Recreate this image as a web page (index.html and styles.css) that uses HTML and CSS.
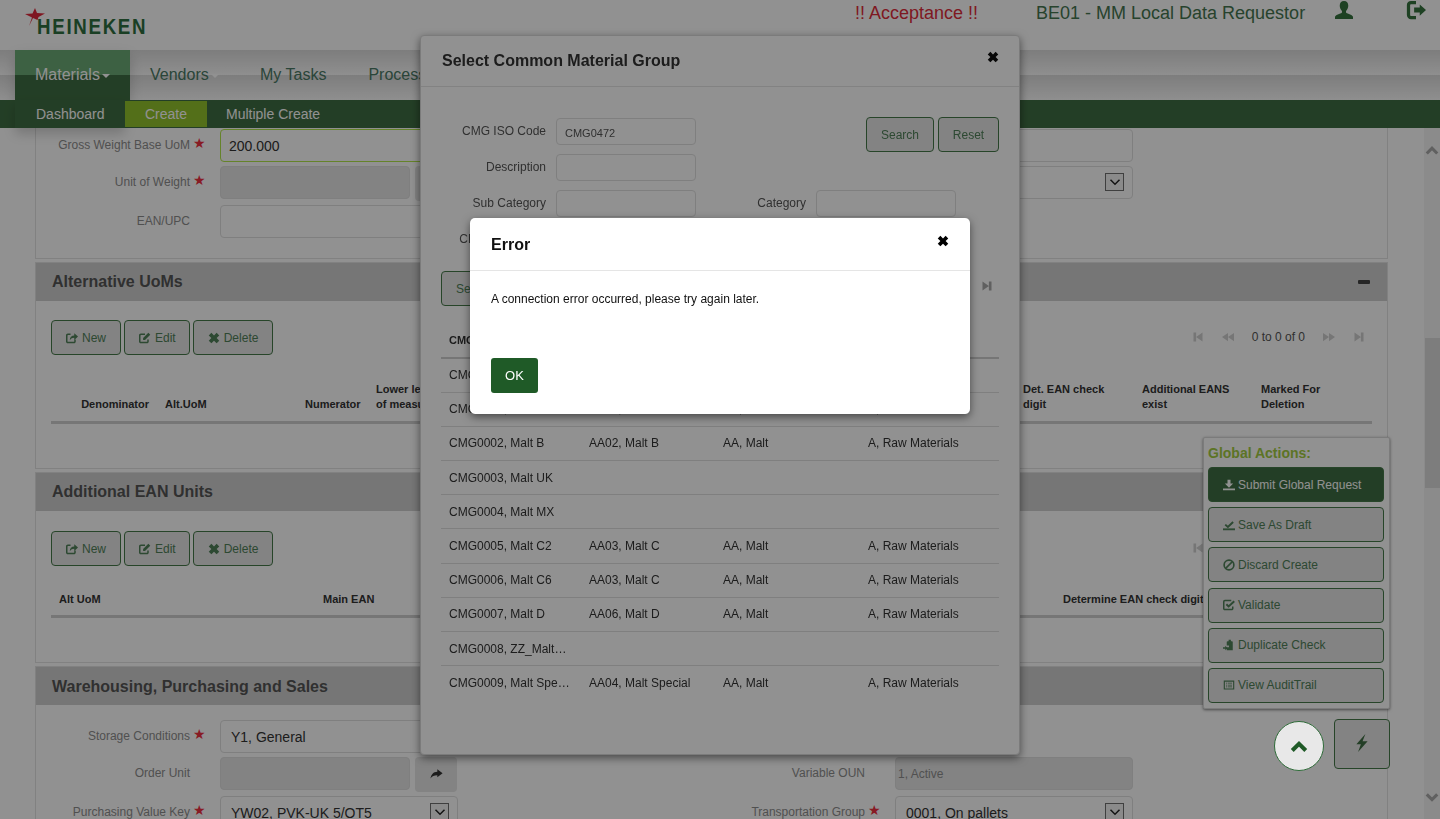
FILE: index.html
```html
<!DOCTYPE html>
<html lang="en">
<head>
    <meta charset="UTF-8">
    <title>Material Create</title>
    <link rel="stylesheet" href="styles.css">
</head>
<body>
    <svg class="defs" aria-hidden="true">
        <symbol id="i-new" viewBox="0 0 16 16"><path d="M12 10v2.500a1.500 1.500 0 0 1-1.500 1.500h-8A1.500 1.500 0 0 1 1 12.500v-8A1.500 1.500 0 0 1 2.500 3H6" fill="none" stroke="currentColor" stroke-width="2"/><path d="M5 11c0-4.500 2.500-6.500 6-6.500V1.500L16 6l-5 4.500V7.500c-2.500 0-4.500 1-6 3.500z"/></symbol>
        <symbol id="i-edit" viewBox="0 0 16 16"><path d="M12 10v2.500a1.500 1.500 0 0 1-1.500 1.500h-8A1.500 1.500 0 0 1 1 12.500v-8A1.500 1.500 0 0 1 2.500 3H8" fill="none" stroke="currentColor" stroke-width="2"/><path d="M5.500 8L12.500 1l2.500 2.500-7 7H5.500z"/></symbol>
        <symbol id="i-x" viewBox="0 0 16 16"><path d="M1 4.500L4.500 1 8 4.500 11.500 1 15 4.500 11.500 8 15 11.500 11.500 15 8 11.500 4.500 15 1 11.500 4.500 8z"/></symbol>
        <symbol id="i-down" viewBox="0 0 16 16"><path d="M0 12.500h16V15H0zM6 1h4v5h3.500L8 11.500 2.500 6H6z"/></symbol>
        <symbol id="i-saved" viewBox="0 0 16 16"><path d="M0 12.500h16V15H0z"/><path d="M3 7.500l3.500 3L13.500 4" fill="none" stroke="currentColor" stroke-width="2.600"/></symbol>
        <symbol id="i-ban" viewBox="0 0 16 16"><circle cx="8" cy="8" r="6.500" fill="none" stroke="currentColor" stroke-width="2.200"/><path d="M3.500 12.500l9-9" stroke="currentColor" stroke-width="2.200"/></symbol>
        <symbol id="i-check" viewBox="0 0 16 16"><path d="M13 10v2.500a1.500 1.500 0 0 1-1.500 1.500h-9A1.500 1.500 0 0 1 1 12.500v-9A1.500 1.500 0 0 1 2.500 2H11" fill="none" stroke="currentColor" stroke-width="2"/><path d="M4.500 7l3 3L15 3" fill="none" stroke="currentColor" stroke-width="2.600"/></symbol>
        <symbol id="i-dup" viewBox="0 0 16 16"><path d="M6 3h1.500V1h3v2H12l1 .5V15H5v-4h3V8.500H5V3.500zM0 11h3V9l3 3-3 3v-2H0z"/></symbol>
        <symbol id="i-list" viewBox="0 0 16 16"><path d="M1 2h14v12H1zM2.500 3.500v9h11v-9zM4 5h1.500v1H4zm2.500 0H12v1H6.500zM4 7.500h1.500v1H4zm2.500 0H12v1H6.500zM4 10h1.500v1H4zm2.500 0H12v1H6.500z" fill-rule="evenodd"/></symbol>
        <symbol id="i-up" viewBox="0 0 16 16"><path d="M2 12l6-6 6 6" fill="none" stroke="currentColor" stroke-width="3.600"/></symbol>
        <symbol id="i-dn" viewBox="0 0 16 16"><path d="M2 5l6 6 6-6" fill="none" stroke="currentColor" stroke-width="3.600"/></symbol>
        <symbol id="i-arrow" viewBox="0 0 16 16"><path d="M2 5l6 6 6-6" fill="none" stroke="currentColor" stroke-width="2"/></symbol>
        <symbol id="i-bolt" viewBox="0 0 16 16"><path d="M11 0L3 9h4l-2.500 7L13 6.500H8.500z"/></symbol>
        <symbol id="i-user" viewBox="0 0 16 16"><path d="M8 0c2.500 0 3.800 1.800 3.800 4.200 0 2-1 3.600-2 4.600v1.500c0 .8 4.900 1.400 6.200 3.700v2H0v-2c1.300-2.300 6.200-2.900 6.200-3.700V8.800c-1-1-2-2.600-2-4.600C4.200 1.800 5.500 0 8 0z"/></symbol>
        <symbol id="i-logout" viewBox="0 0 16 16"><path d="M8 2H4a2 2 0 0 0-2 2v8a2 2 0 0 0 2 2h4" fill="none" stroke="currentColor" stroke-width="2.600"/><path d="M6.500 6h4.500V3.500L16 8l-5 4.500V10H6.500z"/></symbol>
        <symbol id="i-share" viewBox="0 0 16 16"><path d="M15.500 6.500L9 1.500v3C4 4.500 1.500 8 .5 13c2-3 4.500-4 8.500-4v2.500z"/></symbol>
        <symbol id="i-first" viewBox="0 0 16 16"><path d="M2 2h3.500v12H2zM14 2v12L5.500 8z"/></symbol>
        <symbol id="i-prev" viewBox="0 0 16 16"><path d="M8 2.500v11L0 8zM16 2.500v11L8 8z"/></symbol>
        <symbol id="i-next" viewBox="0 0 16 16"><path d="M0 2.500v11L8 8zM8 2.500v11L16 8z"/></symbol>
        <symbol id="i-last" viewBox="0 0 16 16"><path d="M2 2v12l8.500-6zM10.500 2H14v12h-3.500z"/></symbol>
    </svg>

    <div class="page">
        <header class="topbar">
            <div class="logo">
                <svg class="logo-star" viewBox="0 0 20 18"><path d="M10 0l2 5 8 .5-6.500 3.500-1 3L8 10l-4 8 3-8.500L0 6l7.500-.5z"/></svg>
                <span class="logo-text">HEINEKEN</span>
            </div>
            <div class="env">!! Acceptance !!</div>
            <div class="role">BE01 - MM Local Data Requestor</div>
            <svg class="top-ico user-ico"><use href="#i-user"/></svg>
            <svg class="top-ico logout-ico"><use href="#i-logout"/></svg>
        </header>

        <nav class="mainnav">
            <a class="nav-item active">Materials<span class="caret"></span></a>
            <a class="nav-item vendors">Vendors<span class="caret"></span></a>
            <a class="nav-item tasks">My Tasks</a>
            <a class="nav-item">Processes</a>
        </nav>
        <nav class="subnav">
            <a class="sub-item first">Dashboard</a>
            <a class="sub-item current">Create</a>
            <a class="sub-item">Multiple Create</a>
        </nav>

        <div class="main">
            <div class="content">
                <section class="panel first-panel">
                    <div class="form-body top">
                        <div class="form-row">
                            <label class="lbl">Gross Weight Base UoM<span class="req">★</span></label>
                            <input class="inp focus" value="200.000">
                            <label class="lbl right">Net Weight Base UoM<span class="req"></span></label>
                            <input class="inp">
                        </div>
                        <div class="form-row tall">
                            <label class="lbl">Unit of Weight<span class="req">★</span></label>
                            <div class="inp-group"><input class="inp off"><button class="go"><svg class="ico"><use href="#i-share"/></svg></button></div>
                            <label class="lbl right">Volume Unit<span class="req"></span></label>
                            <div class="inp sel"><span class="sel-arrow"><svg><use href="#i-arrow"/></svg></span></div>
                        </div>
                        <div class="form-row">
                            <label class="lbl">EAN/UPC<span class="req"></span></label>
                            <input class="inp">
                        </div>
                    </div>
                </section>

                <section class="panel uom-panel">
                    <h2 class="panel-head">Alternative UoMs<span class="collapse"></span></h2>
                    <div class="panel-body">
                        <div class="toolbar">
                            <div class="btns">
                                <button class="btn"><svg class="ico"><use href="#i-new"/></svg>New</button>
                                <button class="btn"><svg class="ico"><use href="#i-edit"/></svg>Edit</button>
                                <button class="btn"><svg class="ico"><use href="#i-x"/></svg>Delete</button>
                            </div>
                            <div class="pager">
                                <svg class="pg"><use href="#i-first"/></svg>
                                <svg class="pg"><use href="#i-prev"/></svg>
                                <span class="pg-text">0 to 0 of 0</span>
                                <svg class="pg"><use href="#i-next"/></svg>
                                <svg class="pg"><use href="#i-last"/></svg>
                            </div>
                        </div>
                        <table class="grid uom">
                            <colgroup><col class="c1"><col class="c2"><col class="c3"><col class="c4"><col><col class="c6"><col class="c6"><col class="c6"></colgroup>
                            <thead>
                                <tr>
                                    <th class="num">Denominator</th>
                                    <th>Alt.UoM</th>
                                    <th class="num">Numerator</th>
                                    <th>Lower level unit<br>of measure</th>
                                    <th></th>
                                    <th>Det. EAN check digit</th>
                                    <th>Additional EANS exist</th>
                                    <th>Marked For Deletion</th>
                                </tr>
                            </thead>
                        </table>
                    </div>
                </section>

                <section class="panel ean-panel">
                    <h2 class="panel-head">Additional EAN Units</h2>
                    <div class="panel-body">
                        <div class="toolbar">
                            <div class="btns">
                                <button class="btn"><svg class="ico"><use href="#i-new"/></svg>New</button>
                                <button class="btn"><svg class="ico"><use href="#i-edit"/></svg>Edit</button>
                                <button class="btn"><svg class="ico"><use href="#i-x"/></svg>Delete</button>
                            </div>
                            <div class="pager">
                                <svg class="pg"><use href="#i-first"/></svg>
                                <svg class="pg"><use href="#i-prev"/></svg>
                                <span class="pg-text">0 to 0 of 0</span>
                                <svg class="pg"><use href="#i-next"/></svg>
                                <svg class="pg"><use href="#i-last"/></svg>
                            </div>
                        </div>
                        <table class="grid ean">
                            <colgroup><col class="e1"><col><col class="e3"></colgroup>
                            <thead>
                                <tr>
                                    <th>Alt UoM</th>
                                    <th>Main EAN</th>
                                    <th>Determine EAN check digit</th>
                                </tr>
                            </thead>
                        </table>
                    </div>
                </section>

                <section class="panel">
                    <h2 class="panel-head wh-head">Warehousing, Purchasing and Sales</h2>
                    <div class="form-body">
                        <div class="form-row">
                            <label class="lbl">Storage Conditions<span class="req">★</span></label>
                            <input class="inp roomy" value="Y1, General">
                        </div>
                        <div class="form-row tall">
                            <label class="lbl">Order Unit<span class="req"></span></label>
                            <div class="inp-group"><input class="inp off"><button class="go"><svg class="ico"><use href="#i-share"/></svg></button></div>
                            <label class="lbl right">Variable OUN<span class="req"></span></label>
                            <input class="inp off small" value="1, Active">
                        </div>
                        <div class="form-row">
                            <label class="lbl">Purchasing Value Key<span class="req">★</span></label>
                            <div class="inp sel">YW02, PVK-UK 5/OT5<span class="sel-arrow"><svg><use href="#i-arrow"/></svg></span></div>
                            <label class="lbl right">Transportation Group<span class="req">★</span></label>
                            <div class="inp sel">0001, On pallets<span class="sel-arrow"><svg><use href="#i-arrow"/></svg></span></div>
                        </div>
                    </div>
                </section>
            </div>
            <div class="scrollbar">
                <svg class="sc-arrow up"><use href="#i-up"/></svg>
                <div class="thumb"></div>
                <svg class="sc-arrow down"><use href="#i-dn"/></svg>
            </div>
        </div>
    </div>

    <aside class="floating">
        <div class="actions">
            <div class="actions-title">Global Actions:</div>
            <button class="act primary"><svg class="ico"><use href="#i-down"/></svg>Submit Global Request</button>
            <button class="act"><svg class="ico"><use href="#i-saved"/></svg>Save As Draft</button>
            <button class="act"><svg class="ico"><use href="#i-ban"/></svg>Discard Create</button>
            <button class="act"><svg class="ico"><use href="#i-check"/></svg>Validate</button>
            <button class="act"><svg class="ico"><use href="#i-dup"/></svg>Duplicate Check</button>
            <button class="act"><svg class="ico"><use href="#i-list"/></svg>View AuditTrail</button>
        </div>
        <div class="fab-row">
            <button class="to-top"><svg><use href="#i-up"/></svg></button>
            <button class="bolt"><svg><use href="#i-bolt"/></svg></button>
        </div>
    </aside>

    <div class="modal cmg">
        <div class="modal-head">
            <h3>Select Common Material Group</h3>
            <svg class="close"><use href="#i-x"/></svg>
        </div>
        <div class="cmg-form">
            <label class="f-lbl">CMG ISO Code</label>
            <input class="f-inp" value="CMG0472">
            <div class="f-btns">
                <button class="btn plain">Search</button>
                <button class="btn plain">Reset</button>
            </div>
            <label class="f-lbl">Description</label>
            <input class="f-inp">
            <label class="f-lbl c1-start">Sub Category</label>
            <input class="f-inp">
            <label class="f-lbl">Category</label>
            <input class="f-inp">
            <label class="f-lbl c1-start">CMG Reference</label>
            <input class="f-inp">
        </div>
        <div class="cmg-tools">
            <button class="btn">Select</button>
            <svg class="pg dark"><use href="#i-last"/></svg>
        </div>
        <table class="cmg-table">
            <colgroup><col class="m1"><col class="m2"><col class="m3"><col></colgroup>
            <thead>
                <tr><th>CMG</th><th>Sub Category</th><th>Category</th><th>Main Category</th></tr>
            </thead>
            <tbody>
                <tr><td>CMG0000, Malt</td><td></td><td></td><td></td></tr>
                <tr><td>CMG0001, Malt A</td><td>AA01, Malt A</td><td>AA, Malt</td><td>A, Raw Materials</td></tr>
                <tr><td>CMG0002, Malt B</td><td>AA02, Malt B</td><td>AA, Malt</td><td>A, Raw Materials</td></tr>
                <tr><td>CMG0003, Malt UK</td><td></td><td></td><td></td></tr>
                <tr><td>CMG0004, Malt MX</td><td></td><td></td><td></td></tr>
                <tr><td>CMG0005, Malt C2</td><td>AA03, Malt C</td><td>AA, Malt</td><td>A, Raw Materials</td></tr>
                <tr><td>CMG0006, Malt C6</td><td>AA03, Malt C</td><td>AA, Malt</td><td>A, Raw Materials</td></tr>
                <tr><td>CMG0007, Malt D</td><td>AA06, Malt D</td><td>AA, Malt</td><td>A, Raw Materials</td></tr>
                <tr><td>CMG0008, ZZ_MaltOtherTypes</td><td></td><td></td><td></td></tr>
                <tr><td>CMG0009, Malt Special Types</td><td>AA04, Malt Special</td><td>AA, Malt</td><td>A, Raw Materials</td></tr>
            </tbody>
        </table>
    </div>

    <div class="backdrop"></div>

    <div class="modal error">
        <div class="modal-head">
            <h3>Error</h3>
            <svg class="close"><use href="#i-x"/></svg>
        </div>
        <div class="error-body">
            <p>A connection error occurred, please try again later.</p>
            <button class="ok">OK</button>
        </div>
    </div>
</body>
</html>
```

FILE: styles.css
```css
* {
    box-sizing: border-box;
}
html, body {
    height: 100%;
}
body {
    margin: 0;
    overflow: hidden;
    background: #fff;
    color: #333;
    font-family: "Liberation Sans", Arial, sans-serif;
    font-size: 12px;
}
.defs {
    position: absolute;
    width: 0;
    height: 0;
}
svg {
    fill: currentColor;
}
button {
    font-family: inherit;
}
.page {
    height: 100vh;
    display: flex;
    flex-direction: column;
}

/* top bar */
.topbar {
    height: 50px;
    flex: none;
    display: flex;
    font-size: 18px;
    line-height: 26px;
    color: #457650;
}
.logo {
    position: relative;
    width: 146px;
    margin-right: 709px;
    padding: 14px 0 0 37px;
}
.logo-star {
    position: absolute;
    left: 25px;
    top: 8px;
    width: 20px;
    height: 18px;
    color: #e0283a;
    z-index: 1;
}
.logo-text {
    display: inline-block;
    font-weight: bold;
    font-size: 22px;
    letter-spacing: 2px;
    color: #2f7040;
    transform: scaleX(.85);
    transform-origin: left;
}
.env {
    width: 181px;
    color: #e02c3a;
}
.role {
    width: 299px;
}
.top-ico {
    width: 18px;
    height: 18px;
    margin-top: 1px;
    color: #36723f;
}
.logout-ico {
    width: 20px;
    height: 20px;
    margin: 0 0 0 53px;
}

/* main nav */
.mainnav {
    height: 50px;
    flex: none;
    display: flex;
    padding-left: 15px;
    font-size: 16px;
    background: linear-gradient(#dcdcdc, #fbfbfb) 0 0 / 100% 25px repeat-y;
    color: #4a7a65;
}
.nav-item {
    padding: 16px 20px 0;
    white-space: nowrap;
}
.nav-item.active {
    position: relative;
    width: 115px;
    background: linear-gradient(#6cab76 50%, #3f6e43 50%);
    color: #fff;
    box-shadow: 0 6px 12px rgba(0, 0, 0, .18);
}
.nav-item.vendors {
    width: 110px;
}
.nav-item.tasks {
    margin-right: 2px;
}
.caret {
    display: inline-block;
    width: 0;
    margin-left: 2px;
    vertical-align: middle;
    border-top: 4px solid #fff;
    border-left: 4px solid transparent;
    border-right: 4px solid transparent;
}
.subnav {
    position: relative;
    height: 28px;
    flex: none;
    display: flex;
    padding-left: 15px;
    font-size: 14px;
    line-height: 28px;
    background: #3f6e43;
    color: #fff;
}
.sub-item {
    padding: 0 19px;
}
.sub-item.first {
    width: 110px;
    padding: 0 21px;
    box-shadow: 0 6px 12px rgba(0, 0, 0, .18);
}
.sub-item.current {
    width: 82px;
    margin: 1px 0;
    line-height: 26px;
    text-align: center;
    background: #93c32c;
}

/* content */
.main {
    flex: 1;
    display: flex;
    min-height: 0;
}
.content {
    width: 1424px;
    padding: 0 36px 0 35px;
    overflow: hidden;
}
.scrollbar {
    width: 16px;
    display: flex;
    flex-direction: column;
    align-items: center;
    background: #f5f5f5;
    position: relative;
}
.sc-arrow {
    position: absolute;
    width: 14px;
    height: 14px;
    color: #aaa;
}
.sc-arrow.up {
    top: 15px;
}
.sc-arrow.down {
    bottom: 15px;
}
.thumb {
    width: 15px;
    height: 150px;
    margin-top: 210px;
    background: #dcdcdc;
}
.panel {
    border: 1px solid #e3e3e3;
    margin-bottom: 3px;
}
.first-panel {
    border-top: 0;
}
.panel-head {
    position: relative;
    height: 38px;
    margin: 0;
    padding-left: 16px;
    font-size: 16px;
    line-height: 37px;
    color: #555;
    background: #d0d0d0;
}
.wh-head {
    line-height: 39px;
}
.collapse {
    position: absolute;
    left: 1322px;
    top: 17px;
    width: 12px;
    height: 4px;
    border-radius: 1px;
    background: #444;
}
.panel-body {
    padding: 19px 15px 44px;
}
.ean-panel .panel-body {
    padding-top: 20px;
}
.toolbar {
    display: flex;
    justify-content: space-between;
}
.btns {
    display: flex;
    gap: 3px;
}
.btn {
    height: 35px;
    padding: 0 14px;
    font-size: 12px;
    color: #4f8058;
    background: #e6e6e6;
    border: 1px solid #467949;
    border-radius: 4px;
}
.btns .btn:nth-child(2) {
    padding-right: 13px;
}
.ico {
    width: 12px;
    height: 12px;
    margin-right: 4px;
    vertical-align: -2px;
}
.btn.plain {
    padding: 0;
}
.pager {
    display: flex;
    align-items: center;
    gap: 18px;
    padding: 0 7px 1px 0;
    color: #555;
}
.pg {
    width: 12px;
    height: 12px;
    color: #d0d0d0;
}

/* empty grids */
.grid {
    width: 100%;
    table-layout: fixed;
    border-collapse: collapse;
    margin-top: 18px;
}
.grid.uom {
    margin-top: 19px;
}
.grid th {
    padding: 8px;
    padding-bottom: 9px;
    text-align: left;
    vertical-align: bottom;
    font-size: 11px;
    line-height: 15px;
    color: #333;
    border-bottom: 3px solid #cfcfcf;
}
.grid th.num {
    text-align: right;
}
.grid.ean th {
    padding-bottom: 8px;
    white-space: nowrap;
}
.c1 { width: 106px; }
.c2 { width: 140px; }
.c3 { width: 71px; }
.c4 { width: 119px; }
.c6 { width: 119px; }
.e1 { width: 264px; }
.e3 { width: 317px; }

/* forms */
.form-body {
    padding: 15px 0 0;
}
.form-body.top {
    padding: 1px 0 20px;
}
.form-row {
    display: flex;
    height: 33px;
    margin-bottom: 4px;
}
.form-row:last-child {
    margin-bottom: 0;
}
.form-row.tall {
    height: 35px;
}
.lbl {
    display: flex;
    justify-content: flex-end;
    width: 169px;
    height: 33px;
    margin-right: 15px;
    padding-top: 9px;
    line-height: 14px;
    color: #8e8e8e;
    flex: none;
}
.lbl.right {
    width: 422px;
}
.req {
    width: 15px;
    margin-top: -1px;
    padding-left: 3px;
    color: #f03040;
    font-family: "DejaVu Sans", sans-serif;
    font-size: 14px;
    line-height: 12px;
    flex: none;
}
.inp {
    position: relative;
    display: block;
    width: 238px;
    height: 33px;
    padding: 1px 8px 0;
    font-family: inherit;
    font-size: 14px;
    line-height: 30px;
    color: #333;
    background: #fff;
    border: 1px solid #dfdfdf;
    border-radius: 4px;
    flex: none;
}
.inp.roomy, .inp.sel {
    padding-left: 10px;
}
.inp.focus {
    border-color: #b2e64a;
}
.inp.off {
    background: #e6e6e6;
}
.inp.small {
    padding: 0 2px;
    font-size: 12px;
    color: #8e8e8e;
}
.inp-group {
    display: flex;
    gap: 5px;
    width: 238px;
    flex: none;
}
.inp-group .inp {
    width: 190px;
}
.go {
    width: 42px;
    height: 35px;
    padding: 0;
    background: #e6e6e6;
    border: 0;
    border-radius: 4px;
    color: #333;
}
.go .ico {
    margin: 0;
    width: 13px;
    height: 13px;
}
.sel-arrow {
    position: absolute;
    right: 8px;
    top: 6px;
    width: 19px;
    height: 18px;
    display: flex;
    align-items: center;
    justify-content: center;
    background: #f3f3f3;
    border: 1px solid #707070;
}
.sel-arrow svg {
    width: 12px;
    height: 12px;
    color: #222;
}

/* floating actions */
.floating {
    position: absolute;
    right: 50px;
    top: 437px;
    display: flex;
    flex-direction: column;
    align-items: flex-end;
}
.actions {
    width: 187px;
    height: 272px;
    padding: 7px 5px 0 4px;
    display: flex;
    flex-direction: column;
    gap: 5.2px;
    background: #fff;
    border: 1px solid #d8d8d8;
    border-radius: 2px;
    box-shadow: 0 1px 3px rgba(0, 0, 0, .5);
}
.actions-title {
    height: 17px;
    margin-bottom: -.2px;
    font-size: 14px;
    font-weight: bold;
    line-height: 16px;
    color: #a3cc42;
}
.act {
    height: 35px;
    flex: none;
    padding: 0 0 0 14px;
    text-align: left;
    font-size: 12px;
    color: #4f8058;
    background: #e6e6e6;
    border: 1px solid #467949;
    border-radius: 4px;
}
.act .ico {
    margin-right: 3px;
}
.act.primary {
    background: #3f6e43;
    color: #fff;
}
.fab-row {
    display: flex;
    align-items: flex-start;
    gap: 10px;
    margin-top: 10px;
}
.to-top {
    position: relative;
    z-index: 30;
    width: 50px;
    height: 50px;
    margin-top: 2px;
    padding: 0;
    background: #e8e8e8;
    border: 1px solid #2e6b38;
    border-radius: 50%;
    color: #1f5a27;
}
.to-top svg {
    width: 18px;
    height: 18px;
    display: block;
    margin: 0 auto;
}
.bolt {
    width: 56px;
    height: 50px;
    padding: 0;
    background: #e6e6e6;
    border: 1px solid #467949;
    border-radius: 4px;
    color: #3f6e43;
}
.bolt svg {
    width: 18px;
    height: 20px;
    display: block;
    margin: -3px auto 0;
}

/* modals */
.backdrop {
    position: fixed;
    inset: 0;
    z-index: 10;
    background: rgba(0, 0, 0, .43);
}
.modal {
    position: fixed;
    background: #fff;
    border: 1px solid #d8d8d8;
    border-radius: 4px;
    box-shadow: 0 3px 9px rgba(0, 0, 0, .5);
}
.modal-head {
    position: relative;
    height: 52px;
    padding: 15px 21px;
    border-bottom: 1px solid #e5e5e5;
}
.modal-head h3 {
    margin: 0;
    font-size: 16px;
    line-height: 20px;
    color: #333;
}
.close {
    position: absolute;
    right: 20px;
    top: 16px;
    width: 12px;
    height: 12px;
    color: #111;
}
.cmg {
    left: 420px;
    top: 35px;
    width: 600px;
    height: 720px;
    z-index: 5;
}
.cmg .modal-head {
    height: 51px;
}
.cmg .close {
    top: 15px;
}
.cmg-form {
    display: grid;
    grid-template-columns: 105px 140px 100px 140px 33px;
    grid-auto-rows: 27px;
    gap: 9px 10px;
    margin: 31px 20px 0 20px;
}
.f-lbl {
    align-self: center;
    margin-top: -2px;
    text-align: right;
    color: #555;
    white-space: nowrap;
}
.c1-start {
    grid-column: 1;
}
.f-inp {
    width: 140px;
    height: 27px;
    padding: 2px 8px 0;
    font-family: inherit;
    font-size: 11px;
    color: #555;
    background: #fff;
    border: 1px solid #dfdfdf;
    border-radius: 4px;
}
.f-btns {
    grid-column: 3 / 6;
    grid-row: 1;
    justify-self: end;
    display: flex;
    gap: 4px;
    height: 35px;
    margin-top: -1px;
}
.f-btns .btn:first-child {
    width: 68px;
}
.f-btns .btn:last-child {
    width: 61px;
}
.cmg-tools {
    display: flex;
    justify-content: space-between;
    margin: 18px 20px 0;
    padding: 9px 6px 0 0;
    height: 35px;
}
.cmg-tools .btn {
    width: 80px;
    margin-top: -9px;
    text-align: left;
}
.pg.dark {
    color: #aaa;
}
.cmg-table {
    width: 558px;
    margin: 16px 20px 0;
    table-layout: fixed;
    border-collapse: collapse;
}
.m1 { width: 140px; }
.m2 { width: 134px; }
.m3 { width: 145px; }
.cmg-table th {
    height: 36px;
    padding: 0 8px;
    text-align: left;
    font-size: 11px;
    border-bottom: 2px solid #cfcfcf;
}
.cmg-table td {
    height: 34.2px;
    padding: 0 8px;
    color: #333;
    white-space: nowrap;
    overflow: hidden;
    text-overflow: ellipsis;
    border-bottom: 1px solid #dfdfdf;
}
.cmg-table tr:last-child td {
    border-bottom: 0;
}
.error {
    left: 470px;
    top: 218px;
    width: 500px;
    height: 196px;
    z-index: 20;
    border: 0;
    border-radius: 5px;
}
.error .modal-head {
    height: 53px;
    padding: 17px 21px;
}
.error .close {
    right: 21px;
    top: 17px;
    color: #000;
}
.error h3 {
    color: #111;
}
.error-body {
    padding: 21px;
}
.error-body p {
    margin: 0 0 52px;
    line-height: 14px;
    color: #111;
}
.ok {
    width: 47px;
    height: 35px;
    padding: 0;
    font-size: 13px;
    color: #fff;
    background: #1f5a27;
    border: 0;
    border-radius: 3px;
}
```
